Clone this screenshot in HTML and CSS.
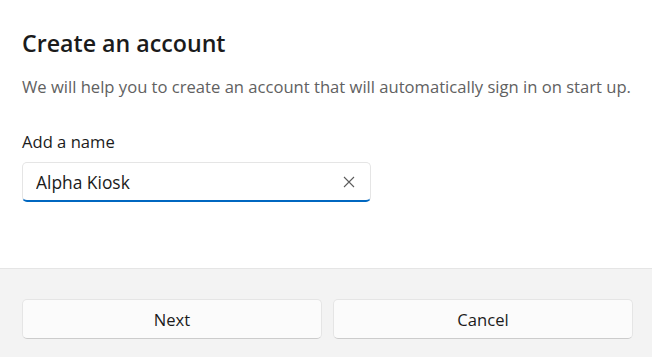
FILE: index.html
```html
<!DOCTYPE html>
<html lang="en">
<head>
  <meta charset="UTF-8" />
  <title>Create an account</title>
  <link rel="stylesheet" href="styles.css">
</head>
<body>
  <div class="dialog">
    <section class="dialog-body">
      <h1>Create an account</h1>
      <p class="intro">We will help you to create an account that will automatically sign in on start up.</p>

      <label class="field-label" for="name">Add a name</label>
      <div class="text-box">
        <input type="text" id="name" value="Alpha Kiosk">
        <span class="clear-btn">
          <svg width="12" height="12" viewBox="0 0 12 12">
            <path d="M1 1 L11 11 M11 1 L1 11" stroke="#5c5c5c" stroke-width="1.1" fill="none"/>
          </svg>
        </span>
      </div>
    </section>

    <footer class="dialog-footer">
      <button class="btn">Next</button>
      <button class="btn">Cancel</button>
    </footer>
  </div>
</body>
</html>
```

FILE: styles.css
```css
body {
  margin: 0;
  padding: 0;
  font-family: 'Open Sans', 'Noto Sans', sans-serif;
  background-color: #fff;
  color: #1b1b1b;
}

.dialog {
  width: 652px;
  height: 357px;
  display: flex;
  flex-direction: column;
  overflow: hidden;
}

.dialog-body {
  height: 268px;
  padding: 0 0 0 22px;
  box-sizing: border-box;
}

h1 {
  font-size: 23.2px;
  font-weight: 600;
  margin: 0;
  padding-top: 27px;
  line-height: 32px;
  color: #1b1b1b;
}

.intro {
  font-size: 16.6px;
  color: #616161;
  margin: 16px 0 0;
  line-height: 24px;
  white-space: nowrap;
}

.field-label {
  display: block;
  font-size: 16.6px;
  margin-top: 31px;
  line-height: 24px;
}

.text-box {
  display: flex;
  align-items: center;
  width: 349px;
  height: 40px;
  margin-top: 8px;
  box-sizing: border-box;
  border: 1px solid #e5e5e5;
  border-bottom: 2px solid #0067c0;
  border-radius: 5px;
  background-color: #fff;
}

.text-box input {
  flex: 1;
  border: none;
  outline: none;
  background: transparent;
  font-family: inherit;
  font-size: 17.4px;
  color: #1b1b1b;
  padding: 0 0 0 13px;
}

.clear-btn {
  display: flex;
  width: 42px;
  justify-content: center;
}

.dialog-footer {
  flex: 1;
  background-color: #f3f3f3;
  border-top: 1px solid #e5e5e5;
  display: flex;
  gap: 11px;
  padding: 30px 19px 0 22px;
  align-items: flex-start;
}

.btn {
  width: 300px;
  height: 40px;
  background-color: #fbfbfb;
  border: 1px solid #e5e5e5;
  border-bottom-color: #cccccc;
  border-radius: 5px;
  font-family: inherit;
  font-size: 16.6px;
  color: #1b1b1b;
}
```
